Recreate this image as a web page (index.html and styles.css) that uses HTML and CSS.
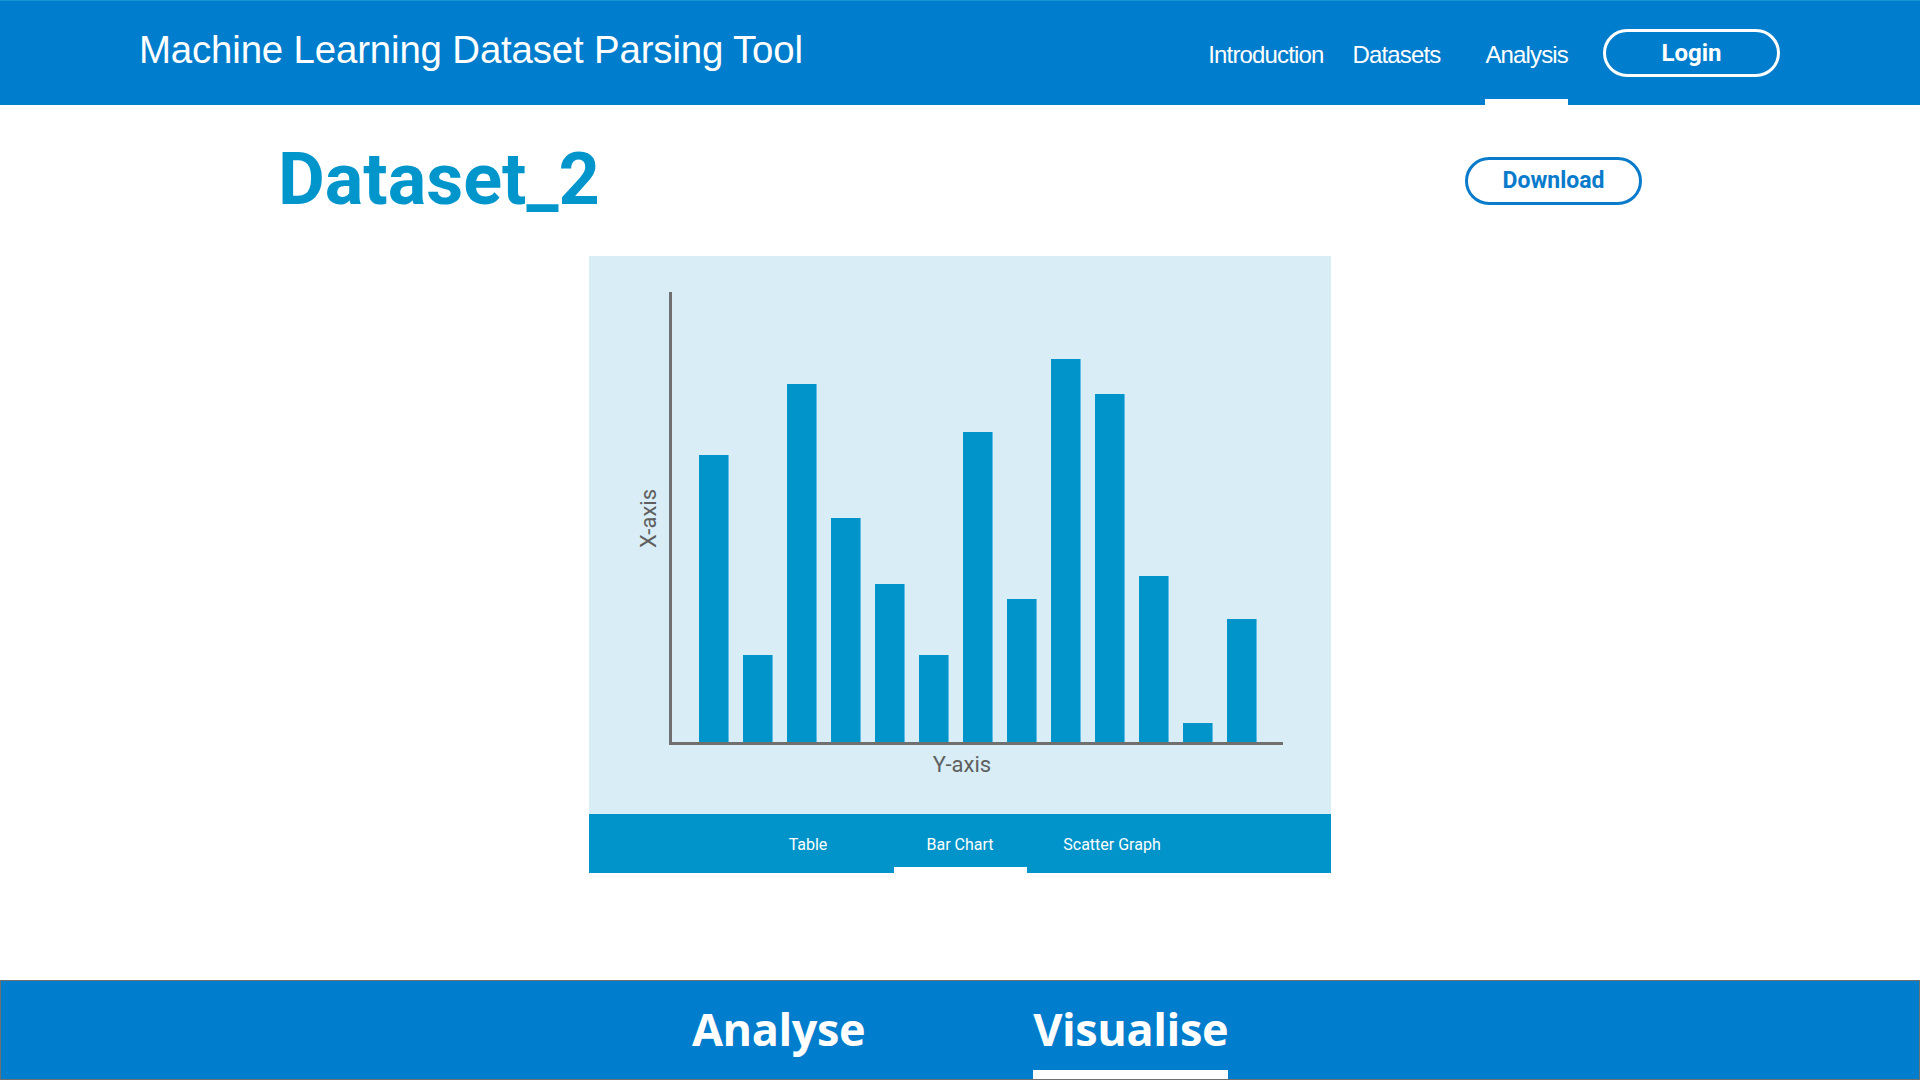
FILE: index.html
```html
<!DOCTYPE html>
<html lang="en">
<head>
<meta charset="utf-8">
<title>Machine Learning Dataset Parsing Tool</title>
<link rel="stylesheet" href="styles.css">
</head>
<body>
<header class="topbar">
  <div class="brand">Machine Learning Dataset Parsing Tool</div>
  <nav class="nav">
    <a class="nav-link" href="#">Introduction</a>
    <a class="nav-link" href="#">Datasets</a>
    <a class="nav-link nav-link--wide active" href="#">Analysis</a>
    <a class="login-btn" href="#">Login</a>
  </nav>
</header>

<main class="main">
  <div class="title-row">
    <h1 class="dataset-title">Dataset_2</h1>
    <a class="download-btn" href="#">Download</a>
  </div>

  <section class="chart-panel">
    <div class="chart-area">
      <div class="plot-row">
        <div class="x-label">X-axis</div>
        <div class="plot">
          <div class="bar" style="height:287px"></div>
          <div class="bar" style="height:87px"></div>
          <div class="bar" style="height:358px"></div>
          <div class="bar" style="height:224px"></div>
          <div class="bar" style="height:158px"></div>
          <div class="bar" style="height:87px"></div>
          <div class="bar" style="height:310px"></div>
          <div class="bar" style="height:143px"></div>
          <div class="bar" style="height:383px"></div>
          <div class="bar" style="height:348px"></div>
          <div class="bar" style="height:166px"></div>
          <div class="bar" style="height:19px"></div>
          <div class="bar" style="height:123px"></div>
        </div>
      </div>
      <div class="y-label">Y-axis</div>
    </div>
    <div class="chart-tabs">
      <a class="chart-tab" href="#">Table</a>
      <a class="chart-tab active" href="#">Bar Chart</a>
      <a class="chart-tab" href="#">Scatter Graph</a>
    </div>
  </section>
</main>

<footer class="bottombar">
  <a class="bottom-link" href="#">Analyse</a>
  <a class="bottom-link active" href="#">Visualise</a>
</footer>
</body>
</html>
```

FILE: styles.css
```css
* { box-sizing: border-box; }

html, body {
  margin: 0;
  padding: 0;
}

body {
  min-height: 100vh;
  display: flex;
  flex-direction: column;
  background: #ffffff;
  font-family: Roboto, "Liberation Sans", sans-serif;
  overflow: hidden;
}

a { text-decoration: none; color: inherit; }

/* ---------- Header ---------- */
.topbar {
  height: 105px;
  background: #007dcc;
  border-top: 1px solid #1596d4;
  display: flex;
  align-items: center;
  justify-content: space-between;
  padding: 0 140px 0 139px;
  color: #ffffff;
}

.brand {
  font-family: "Liberation Sans", Arial, sans-serif;
  font-size: 38.4px;
  margin-bottom: 7px;
  letter-spacing: -0.15px;
}

.nav {
  display: flex;
  align-items: center;
  height: 100%;
}

.nav-link {
  position: relative;
  height: 100%;
  display: flex;
  align-items: center;
  padding-top: 4px;
  font-family: "Liberation Sans", Arial, sans-serif;
  font-size: 24px;
  letter-spacing: -0.85px;
  margin-left: 29px;
}

.nav-link:first-child { margin-left: 0; }

.nav-link--wide { margin-left: 45px; }

.nav-link.active::after {
  content: "";
  position: absolute;
  left: 0;
  right: 0;
  bottom: 0;
  height: 6px;
  background: #ffffff;
}

.login-btn {
  margin-left: 35px;
  width: 177px;
  height: 48px;
  border: 3px solid #ffffff;
  border-radius: 24px;
  display: flex;
  align-items: center;
  justify-content: center;
  font-family: Roboto, sans-serif;
  font-weight: 700;
  font-size: 24px;
}

/* ---------- Main ---------- */
.main {
  display: flex;
  flex-direction: column;
  align-items: center;
}

.title-row {
  width: 100%;
  margin-top: 39px;
  padding: 0 278px;
  display: flex;
  align-items: center;
  justify-content: space-between;
}

.dataset-title {
  margin: 0;
  font-family: Roboto, sans-serif;
  font-weight: 700;
  font-size: 72px;
  line-height: 71px;
  color: #0096cc;
}

.download-btn {
  width: 177px;
  height: 48px;
  margin-top: 2px;
  border: 3px solid #0a7bcb;
  border-radius: 24px;
  display: flex;
  align-items: center;
  justify-content: center;
  font-family: Roboto, sans-serif;
  font-weight: 700;
  font-size: 23px;
  color: #0a7bcb;
}

/* ---------- Chart panel ---------- */
.chart-panel {
  margin-top: 41px;
  width: 742px;
  display: flex;
  flex-direction: column;
}

.chart-area {
  background: #d8edf6;
  height: 558px;
  padding-top: 36px;
  display: flex;
  flex-direction: column;
}

.plot-row {
  display: flex;
  align-items: center;
  padding-left: 48px;
}

.x-label {
  width: 24px;
  margin-right: 8px;
  writing-mode: vertical-rl;
  transform: rotate(180deg);
  font-size: 22px;
  line-height: 24px;
  color: #5f5f5f;
  text-align: center;
}

.plot {
  width: 614px;
  height: 453px;
  border-left: 3px solid #707070;
  border-bottom: 3px solid #707070;
  display: flex;
  align-items: flex-end;
  gap: 15px;
  padding-left: 27px;
}

.bar {
  width: 29px;
  background: #0094ca;
  box-shadow: 1px 0 0 #5fbce3;
}

.y-label {
  margin-top: 7px;
  text-align: center;
  font-size: 22px;
  color: #5f5f5f;
  padding-left: 4px;
}

.chart-tabs {
  height: 59px;
  background: #0094ca;
  display: flex;
  justify-content: center;
  gap: 19px;
}

.chart-tab {
  position: relative;
  width: 133px;
  display: flex;
  align-items: center;
  justify-content: center;
  font-size: 16px;
  color: #ffffff;
  padding-top: 2px;
}

.chart-tab.active::after {
  content: "";
  position: absolute;
  left: 0;
  right: 0;
  bottom: 0;
  height: 6px;
  background: #ffffff;
}

/* ---------- Footer ---------- */
.bottombar {
  margin-top: auto;
  height: 100px;
  background: #007dcc;
  border: 1px solid #6f6f6f;
  display: flex;
  justify-content: center;
  gap: 168px;
}

.bottom-link {
  position: relative;
  display: flex;
  align-items: center;
  padding-bottom: 3px;
  font-family: "Open Sans", sans-serif;
  font-weight: 700;
  font-size: 45px;
  letter-spacing: -0.4px;
  color: #ffffff;
}

.bottom-link.active::after {
  content: "";
  position: absolute;
  left: 0;
  right: 0;
  bottom: 0;
  height: 9px;
  background: #ffffff;
}
```
